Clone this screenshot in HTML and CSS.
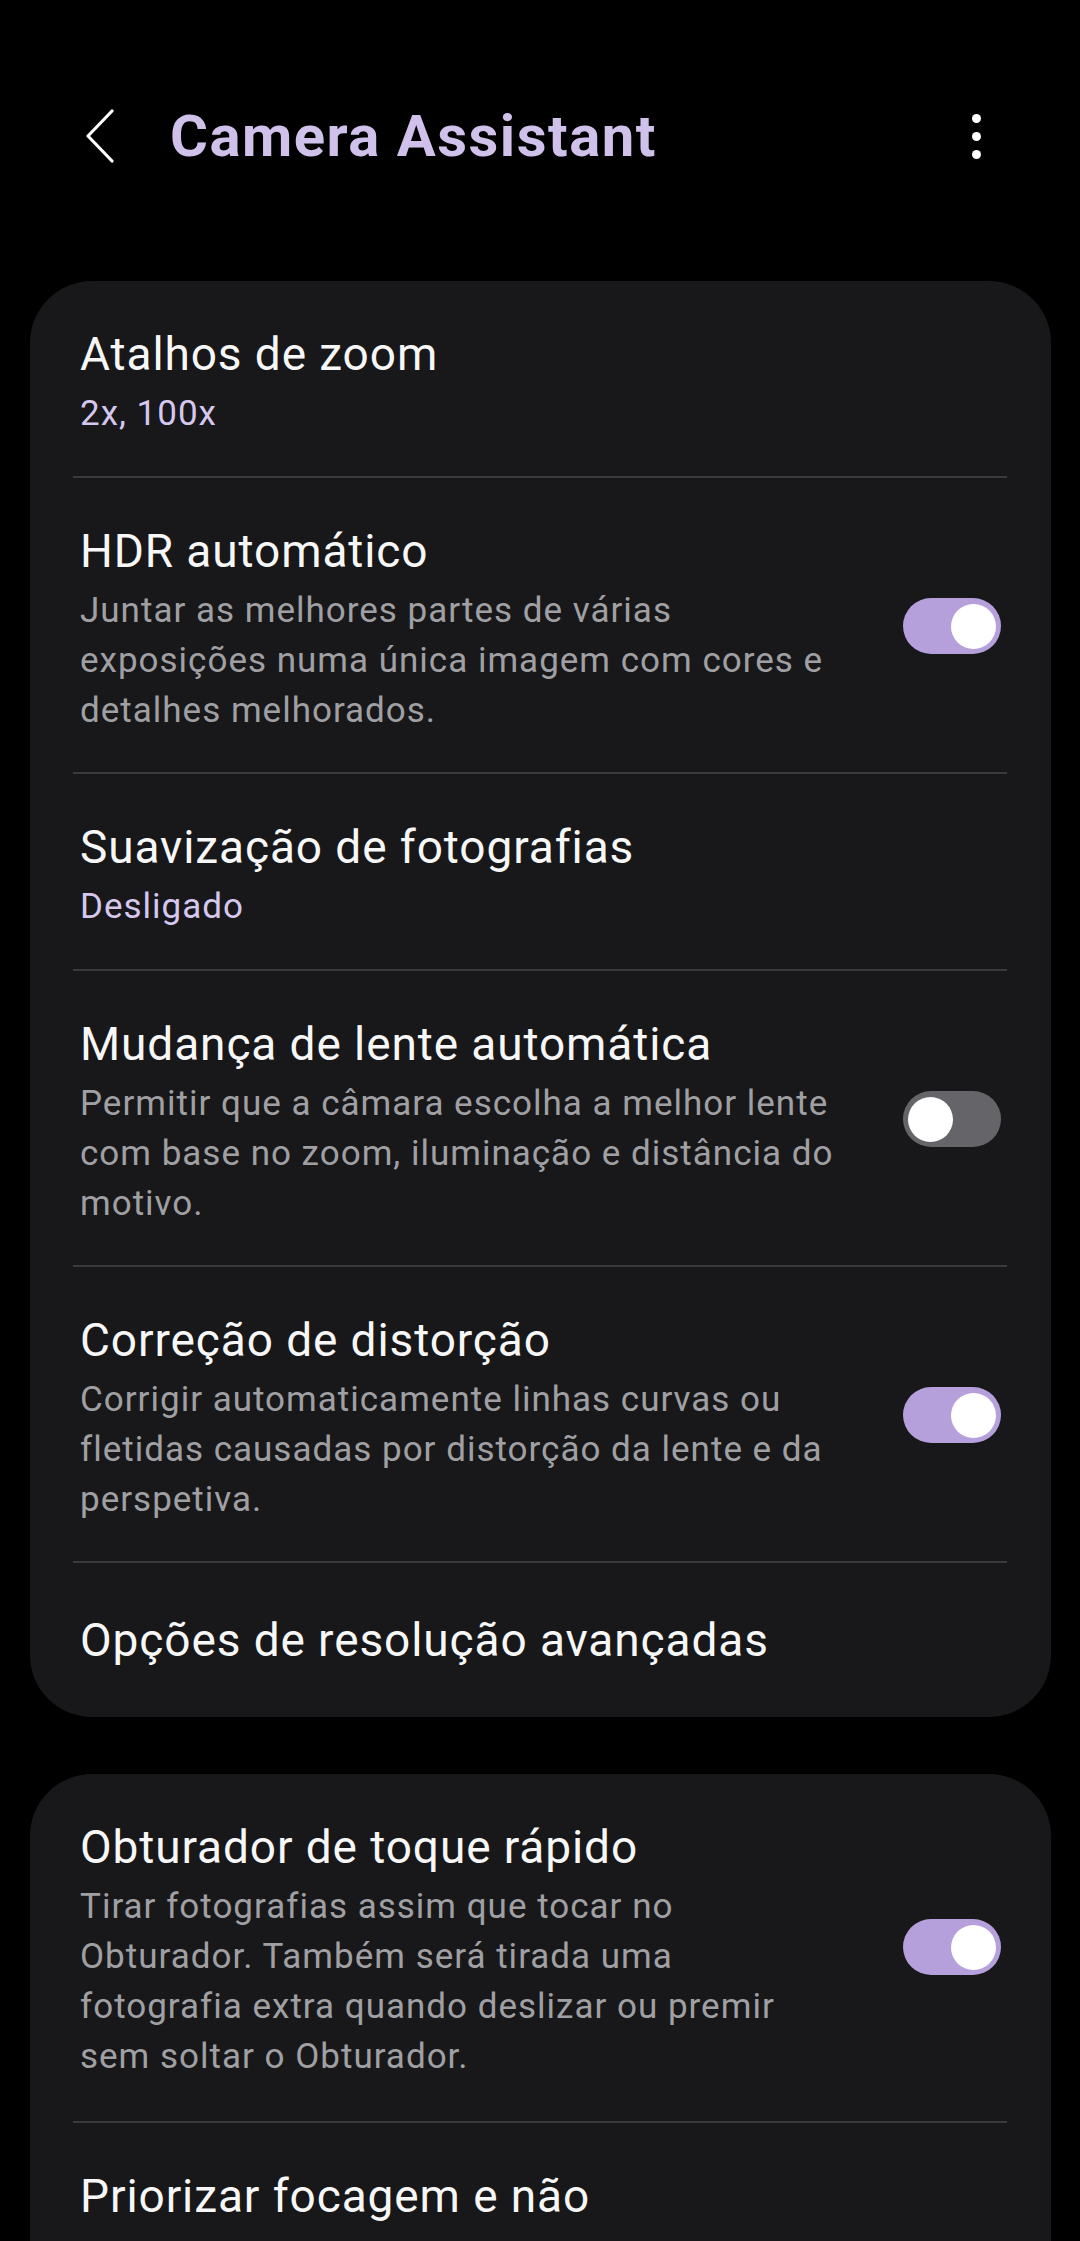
FILE: index.html
```html
<!DOCTYPE html>
<html lang="pt">
<head>
<meta charset="utf-8">
<title>Camera Assistant</title>
<link rel="stylesheet" href="styles.css">
</head>
<body>
<header class="appbar">
  <svg class="back" width="30" height="54" viewBox="0 0 30 54"><polyline points="27,2 3,27 27,52" fill="none" stroke="#fff" stroke-width="3.2" stroke-linecap="round" stroke-linejoin="round"/></svg>
  <h1 class="title">Camera Assistant</h1>
  <div class="more"><span></span><span></span><span></span></div>
</header>

<main>
  <section class="card">
    <div class="row">
      <div class="text">
        <div class="label">Atalhos de zoom</div>
        <div class="value">2x, 100x</div>
      </div>
    </div>
    <div class="divider"></div>
    <div class="row">
      <div class="text">
        <div class="label">HDR automático</div>
        <div class="desc">Juntar as melhores partes de várias exposições numa única imagem com cores e detalhes melhorados.</div>
      </div>
      <div class="switch on"><span class="knob"></span></div>
    </div>
    <div class="divider"></div>
    <div class="row">
      <div class="text">
        <div class="label">Suavização de fotografias</div>
        <div class="value">Desligado</div>
      </div>
    </div>
    <div class="divider"></div>
    <div class="row">
      <div class="text">
        <div class="label">Mudança de lente automática</div>
        <div class="desc">Permitir que a câmara escolha a melhor lente com base no zoom, iluminação e distância do motivo.</div>
      </div>
      <div class="switch"><span class="knob"></span></div>
    </div>
    <div class="divider"></div>
    <div class="row">
      <div class="text">
        <div class="label">Correção de distorção</div>
        <div class="desc">Corrigir automaticamente linhas curvas ou fletidas causadas por distorção da lente e da perspetiva.</div>
      </div>
      <div class="switch on"><span class="knob"></span></div>
    </div>
    <div class="divider"></div>
    <div class="row single">
      <div class="text">
        <div class="label">Opções de resolução avançadas</div>
      </div>
    </div>
  </section>

  <section class="card">
    <div class="row tall">
      <div class="text">
        <div class="label">Obturador de toque rápido</div>
        <div class="desc">Tirar fotografias assim que tocar no Obturador. Também será tirada uma fotografia extra quando deslizar ou premir sem soltar o Obturador.</div>
      </div>
      <div class="switch on"><span class="knob"></span></div>
    </div>
    <div class="divider"></div>
    <div class="row">
      <div class="text">
        <div class="label">Priorizar focagem e não<br>velocidade</div>
      </div>
    </div>
  </section>
</main>
</body>
</html>
```

FILE: styles.css
```css
* { box-sizing: border-box; }
html, body {
  margin: 0;
  padding: 0;
  background: #000;
}
body {
  font-family: Roboto, "Noto Sans", "Liberation Sans", sans-serif;
  color: #f7f7f7;
  height: 2241px;
  overflow: hidden;
}
.appbar {
  display: flex;
  align-items: center;
  height: 100px;
  margin-top: 86px;
  padding: 0 99px 0 85px;
}
.back { display: block; flex: none; }
.title {
  margin: 0 0 0 55px;
  font-size: 58px;
  font-weight: 700;
  color: #d0c1ea;
  letter-spacing: 1.5px;
}
.more {
  margin-left: auto;
  display: flex;
  flex-direction: column;
  gap: 9px;
}
.more span {
  width: 9px;
  height: 9px;
  border-radius: 50%;
  background: #fff;
}
main {
  margin-top: 95px;
  display: flex;
  flex-direction: column;
  gap: 57px;
}
.card {
  margin: 0 29px 0 30px;
  background: #18181a;
  border-radius: 62px;
  overflow: hidden;
}
.row {
  display: flex;
  align-items: center;
  gap: 63px;
  padding: 41px 50px 39px 50px;
}
.row.single { padding: 45px 50px 45px 50px; }
.row.tall { padding-bottom: 42px; }
.text { flex: 1; min-width: 0; }
.label {
  font-size: 46px;
  line-height: 64px;
  letter-spacing: 0.9px;
  color: #f7f7f7;
}
.value {
  font-size: 35px;
  line-height: 50px;
  letter-spacing: 1px;
  margin-top: 3px;
  margin-bottom: -2px;
  color: #d5c7ee;
}
.desc {
  font-size: 35px;
  line-height: 50px;
  letter-spacing: 1px;
  margin-top: 3px;
  margin-bottom: -3px;
  color: #a0a0a4;
}
.divider {
  height: 2px;
  margin: 0 44px 0 43px;
  background: #3a3a3d;
}
.switch {
  flex: none;
  width: 98px;
  height: 56px;
  border-radius: 28px;
  background: #656569;
  display: flex;
  align-items: center;
  padding: 0 5px;
}
.switch.on {
  background: #b6a0dc;
  justify-content: flex-end;
}
.knob {
  width: 45px;
  height: 45px;
  border-radius: 50%;
  background: #fff;
}
```
